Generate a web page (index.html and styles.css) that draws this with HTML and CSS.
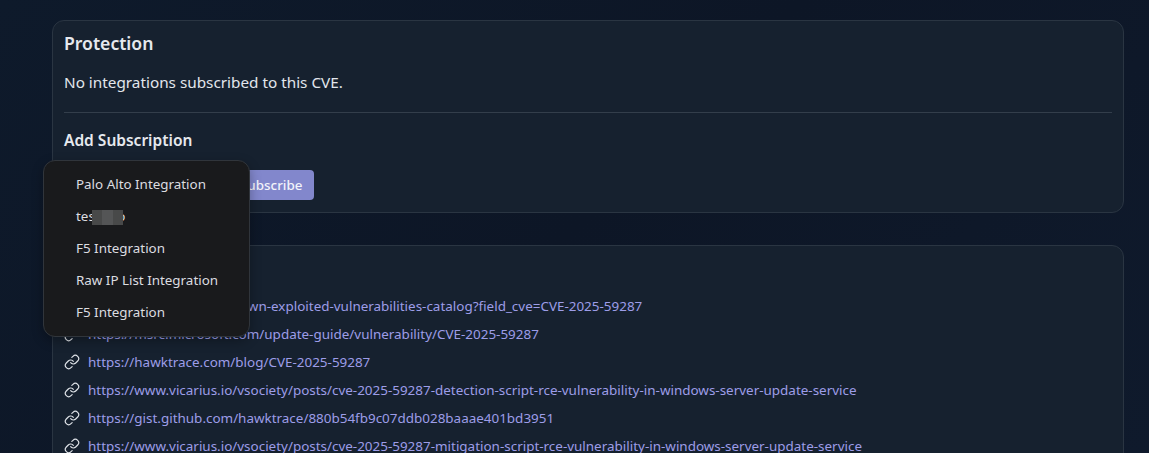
FILE: index.html
```html
<!DOCTYPE html>
<html>
  <head>
    <meta charset="UTF-8" />
    <title>CVE-2025-59287</title>
    <link rel="stylesheet" href="styles.css">
  </head>
  <body>
    <div class="page">
      <section class="card">
        <h2 class="card-title">Protection</h2>
        <p class="empty-note">No integrations subscribed to this CVE.</p>
        <hr class="divider">
        <h3 class="sub-title">Add Subscription</h3>
        <div class="subscribe-row">
          <div class="select-box"></div>
          <button class="subscribe-btn">Subscribe</button>
        </div>
      </section>

      <section class="card refs-card">
        <h2 class="card-title">References</h2>
        <ul class="ref-list">
          <li class="ref-item">
            <svg class="link-icon" viewBox="0 0 24 24"><use href="#chain"></use></svg>
            <a href="#">https://www.cisa.gov/known-exploited-vulnerabilities-catalog?field_cve=CVE-2025-59287</a>
          </li>
          <li class="ref-item">
            <svg class="link-icon" viewBox="0 0 24 24"><use href="#chain"></use></svg>
            <a href="#">https://msrc.microsoft.com/update-guide/vulnerability/CVE-2025-59287</a>
          </li>
          <li class="ref-item">
            <svg class="link-icon" viewBox="0 0 24 24"><use href="#chain"></use></svg>
            <a href="#">https://hawktrace.com/blog/CVE-2025-59287</a>
          </li>
          <li class="ref-item">
            <svg class="link-icon" viewBox="0 0 24 24"><use href="#chain"></use></svg>
            <a href="#">https://www.vicarius.io/vsociety/posts/cve-2025-59287-detection-script-rce-vulnerability-in-windows-server-update-service</a>
          </li>
          <li class="ref-item">
            <svg class="link-icon" viewBox="0 0 24 24"><use href="#chain"></use></svg>
            <a href="#">https://gist.github.com/hawktrace/880b54fb9c07ddb028baaae401bd3951</a>
          </li>
          <li class="ref-item">
            <svg class="link-icon" viewBox="0 0 24 24"><use href="#chain"></use></svg>
            <a href="#">https://www.vicarius.io/vsociety/posts/cve-2025-59287-mitigation-script-rce-vulnerability-in-windows-server-update-service</a>
          </li>
        </ul>
      </section>
    </div>

    <!-- open select dropdown -->
    <div class="menu">
      <div class="menu-item">Palo Alto Integration</div>
      <div class="menu-item">tes<span class="redacted"><i></i><i></i><i></i></span><span class="redacted-tail">o</span></div>
      <div class="menu-item">F5 Integration</div>
      <div class="menu-item">Raw IP List Integration</div>
      <div class="menu-item">F5 Integration</div>
    </div>

    <svg class="icon-defs" width="0" height="0">
      <symbol id="chain" viewBox="0 0 24 24">
        <path d="M10 13a5 5 0 0 0 7.54.54l3-3a5 5 0 0 0-7.07-7.07l-1.72 1.71" />
        <path d="M14 11a5 5 0 0 0-7.54-.54l-3 3a5 5 0 0 0 7.07 7.07l1.71-1.71" />
      </symbol>
    </svg>
  </body>
</html>
```

FILE: styles.css
```css
html, body {
  margin: 0;
  padding: 0;
  height: 453px;
  overflow: hidden;
}

body {
  background: linear-gradient(135deg, #0e1a2b 0%, #0d1626 50%, #0f1a2c 100%);
  font-family: "Noto Sans", sans-serif;
  color: #e2e6ec;
  position: relative;
}

.page {
  padding: 20px 25px 0 52px;
  display: flex;
  flex-direction: column;
  gap: 32px;
}

.card {
  box-sizing: border-box;
  background: #16212f;
  border: 1px solid #2a3542;
  border-radius: 12px;
  padding: 10px 11px 11px;
  height: 193px;
  flex: none;
}

.refs-card {
  height: 300px;
}

.card-title {
  margin: 0;
  font-size: 17.6px;
  line-height: 24px;
  font-weight: 600;
  color: #e6e9ee;
}

.empty-note {
  margin: 15px 0 0;
  font-size: 15.3px;
  line-height: 24px;
  color: #e2e6ec;
}

.divider {
  margin: 18px 0 0;
  border: 0;
  border-top: 1px solid #333e4b;
}

.sub-title {
  margin: 15px 0 0;
  font-size: 15.5px;
  line-height: 24px;
  font-weight: 600;
  color: #e6e9ee;
}

.subscribe-row {
  display: flex;
  gap: 8px;
  margin-top: 18px;
}

.select-box {
  width: 156px;
  height: 30px;
}

.subscribe-btn {
  background: #8287cc;
  color: #f2f3fa;
  border: 0;
  border-radius: 4px;
  height: 30px;
  padding: 0 12px 1px;
  font-family: inherit;
  font-size: 13.4px;
  font-weight: 500;
}

.ref-list {
  list-style: none;
  margin: 12px 0 0;
  padding: 0;
}

.ref-item {
  display: flex;
  align-items: center;
  gap: 8px;
  height: 28px;
  font-size: 13.45px;
}

.ref-item a {
  color: #9d9de8;
  text-decoration: none;
  white-space: nowrap;
}

.link-icon {
  width: 16px;
  height: 16px;
  fill: none;
  stroke: #dfe3e8;
  stroke-width: 1.75;
  stroke-linecap: round;
  stroke-linejoin: round;
  flex: none;
}

.icon-defs {
  position: absolute;
}

.menu {
  position: absolute;
  left: 43px;
  top: 160px;
  width: 207px;
  height: 177px;
  box-sizing: border-box;
  padding: 7px 0;
  background: #191a1c;
  border: 1px solid #30353b;
  border-radius: 12px;
  box-shadow: 0 4px 12px rgba(0, 0, 0, 0.3);
}

.menu-item {
  height: 32px;
  line-height: 32px;
  padding-left: 32px;
  font-size: 13.4px;
  color: #dcdde0;
}

.redacted {
  display: inline-flex;
  vertical-align: middle;
  height: 15px;
  margin-left: -3px;
  position: relative;
  z-index: 1;
}

.redacted i {
  width: 10.5px;
  height: 15px;
  background: #484949;
}

.redacted i:nth-child(2) {
  background: #545556;
}

.redacted-tail {
  margin-left: -6px;
}
```
